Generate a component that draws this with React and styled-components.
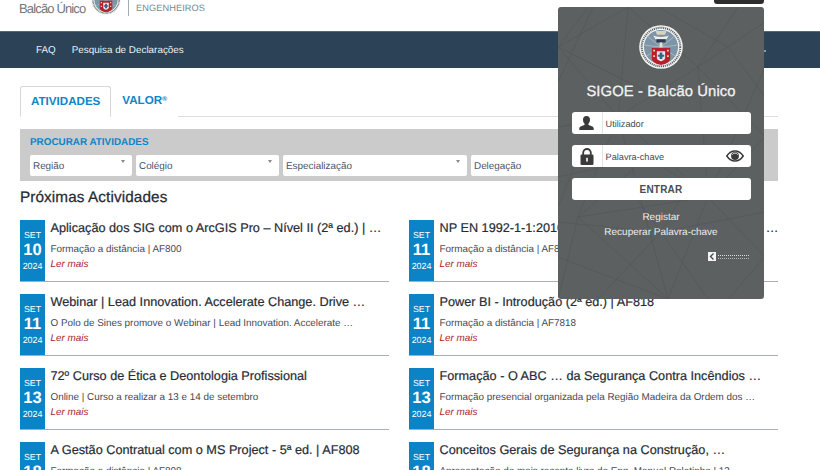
import React from 'react'
import styled, { createGlobalStyle } from 'styled-components'

const Global = createGlobalStyle`
  html, body { margin: 0; padding: 0; height: 470px; overflow: hidden; background: #fff; }
  body { font-family: "Liberation Sans", Arial, sans-serif; color: #272b33; text-rendering: geometricPrecision; }
  * { box-sizing: border-box; }
`

const Page = styled.div`
  position: relative;
  width: 820px;
  height: 470px;
  overflow: hidden;
`

const Header = styled.header`
  height: 31px;
  padding-left: 19px;
  display: flex;
  align-items: flex-end;
  overflow: hidden;
`

const BrandName = styled.span`
  width: 66px;
  font-size: 13px;
  letter-spacing: -0.85px;
  color: #73787c;
  line-height: 16px;
  margin-bottom: 14px;
  white-space: nowrap;
`

const Crest = styled.svg`
  width: 30px;
  height: 30px;
  margin: 0 7px 16px 6px;
  flex: none;
`

const Divider = styled.i`
  width: 1px;
  height: 16px;
  background: #a3abb0;
  margin-bottom: 15px;
`

const BrandSide = styled.span`
  font-size: 9.2px;
  letter-spacing: 0.1px;
  color: #6f8a96;
  margin: 0 0 17px 7px;
  line-height: 12px;
`

const Nav = styled.nav`
  height: 37px;
  background: #2b4257;
  padding-left: 36px;
  display: flex;
  align-items: center;
  gap: 16px;
  border-top: 1px solid #55697a;
`

const NavLink = styled.a`
  font-size: 9.9px;
  padding-top: 1px;
  color: #eef1f3;
`

const NavDot = styled.i`
  width: 2px;
  height: 2px;
  margin: 1px 54px 0 auto;
  background: #8c9aa6;
`

const Main = styled.main`
  padding: 18px 42px 0 20px;
`

const Tabs = styled.div`
  display: flex;
  height: 31px;
  border-bottom: 1px solid #dcdfe2;
`

const Tab = styled.a`
  height: 31px;
  padding: 0 10px;
  display: flex;
  align-items: center;
  font-size: 11.6px;
  font-weight: 700;
  color: #0c85c9;
  border-radius: 3px 3px 0 0;
  border: 1px solid ${p => (p.$active ? '#d3d7da' : 'transparent')};
  border-bottom: ${p => (p.$active ? '1px solid #fff' : '0')};
  background: #fff;
  padding-bottom: ${p => (p.$active ? '0' : '4px')};
  sup { font-size: 7px; line-height: 0; }
`

const Filter = styled.section`
  margin-top: 12px;
  height: 52px;
  background: #cbcbcb;
  padding: 8px 10px 0;
`

const FilterTitle = styled.div`
  font-size: 9.9px;
  font-weight: 700;
  color: #0c85c9;
  line-height: 12px;
  margin-bottom: 6px;
`

const FilterRow = styled.div`
  display: grid;
  grid-template-columns: 102px 143px 184px 200px;
  gap: 4px;
`

const Select = styled.div`
  position: relative;
  height: 21px;
  background: #fff;
  border-radius: 2px;
  padding: 1px 0 0 3px;
  display: flex;
  align-items: center;
  font-size: 9.9px;
  color: #4a5568;
  &::after {
    content: '';
    position: absolute;
    right: 7px;
    top: 5px;
    border: 2.5px solid transparent;
    border-top: 3px solid #888;
    border-bottom: 0;
  }
`

const Heading = styled.h2`
  margin: 8px 0 13px;
  font-size: 15.3px;
  line-height: 18px;
  font-weight: 400;
  letter-spacing: 0.1px;
  -webkit-text-stroke: 0.25px #272b33;
`

const Grid = styled.div`
  display: grid;
  grid-template-columns: 369px 369px;
  column-gap: 20px;
  row-gap: 12px;
`

const Card = styled.article`
  height: 62px;
  display: flex;
  border-bottom: 1px solid #a9aeb6;
`

const DateBox = styled.div`
  width: 25px;
  flex: none;
  background: #0a84c6;
  color: #fff;
  display: flex;
  flex-direction: column;
  align-items: center;
  padding-top: 10px;
`

const Month = styled.span`
  font-size: 8.8px;
  line-height: 10px;
`

const Day = styled.span`
  font-size: 16.5px;
  font-weight: 700;
  line-height: 17px;
  margin-top: 2px;
`

const Year = styled.span`
  font-size: 8.9px;
  line-height: 10px;
  margin-top: 2px;
`

const Body = styled.div`
  min-width: 0;
  padding-left: 5.5px;
`

const Title = styled.h3`
  margin: 0;
  font-size: 12.7px;
  line-height: 16px;
  font-weight: 400;
  -webkit-text-stroke: 0.2px #272b33;
  white-space: nowrap;
`

const Text = styled.p`
  margin: 7px 0 0;
  font-size: 9.9px;
  line-height: 13px;
  color: #444a52;
  white-space: nowrap;
`

const More = styled.a`
  display: block;
  margin-top: 2px;
  font-size: 9.9px;
  line-height: 13px;
  font-style: italic;
  color: #a81c2b;
`

const TopButton = styled.div`
  position: absolute;
  top: 0;
  left: 714px;
  width: 50px;
  height: 4px;
  background: #2d2d2d;
  border-radius: 0 0 3px 3px;
`

const Panel = styled.aside`
  position: absolute;
  left: 558px;
  top: 7px;
  width: 206px;
  height: 292px;
  border-radius: 3px;
  background: #5c6060;
  overflow: hidden;
  display: flex;
  flex-direction: column;
  align-items: center;
  padding-top: 18px;
  color: #f2f2f2;
`

const Mesh = styled.svg`
  position: absolute;
  inset: 0;
  width: 100%;
  height: 100%;
`

const Emblem = styled.svg`
  position: relative;
  width: 44px;
  height: 44px;
  flex: none;
`

const PanelTitle = styled.h1`
  position: relative;
  margin: 14px 0 11px;
  font-size: 14.8px;
  line-height: 18px;
  font-weight: 400;
  letter-spacing: 0.1px;
  -webkit-text-stroke: 0.3px #f2f2f2;
`

const Field = styled.div`
  position: relative;
  width: 179px;
  height: 22px;
  margin-bottom: 11px;
  background: #fff;
  border-radius: 3px;
  display: flex;
  align-items: center;
  font-size: 9.2px;
  line-height: 12px;
  color: #454a4e;
`

const FieldIcon = styled.span`
  width: 31px;
  height: 100%;
  flex: none;
  display: flex;
  align-items: center;
  justify-content: center;
  border-right: 1px solid #e4e4e4;
  margin-right: 3px;
`

const FieldLabel = styled.span`
  padding-top: 1px;
`

const Eye = styled.svg`
  position: absolute;
  right: 7px;
  top: 5px;
  width: 18px;
  height: 12px;
`

const Enter = styled.button`
  position: relative;
  width: 179px;
  height: 22px;
  border: 0;
  border-radius: 3px;
  background: #fff;
  font-family: inherit;
  font-size: 10px;
  font-weight: 700;
  letter-spacing: 0.2px;
  color: #4a4e50;
  padding: 0;
  margin-bottom: 10px;
`

const PanelLink = styled.a`
  position: relative;
  font-size: 10px;
  line-height: 15px;
  color: #eeeeee;
`

const Partner = styled.div`
  position: relative;
  align-self: flex-end;
  margin: 12px 15px 0 0;
  display: flex;
  align-items: center;
  gap: 2px;
`

const PartnerMark = styled.svg`
  width: 8px;
  height: 9px;
  flex: none;
`

const PartnerLines = styled.i`
  display: block;
  width: 31px;
  height: 4px;
  border-top: 1px dotted #dcdcdc;
  border-bottom: 1px dotted #bcbcbc;
`

const meshLines = [
  'M0 40 L70 0 L140 60 L207 15', 'M0 40 L60 110 L20 210 L0 292', 'M70 0 L60 110 L140 60 L207 130',
  'M60 110 L150 190 L207 130', 'M20 210 L150 190 L110 292', 'M20 210 L110 292 L0 250',
  'M150 190 L207 250 L170 292', 'M140 60 L150 190', 'M0 120 L60 110', 'M60 110 L110 292',
  'M30 0 L0 40 L100 90', 'M207 60 L150 190 L90 150', 'M0 170 L90 150 L20 210', 'M180 0 L140 60',
  'M103 225 L40 292', 'M103 225 L0 215', 'M103 225 L207 205', 'M103 225 L150 292', 'M103 225 L70 180',
  'M103 225 L135 170', 'M207 90 L170 40 L100 0', 'M0 75 L35 0', 'M20 150 L0 200',
]

const activities = [
  ['10', 'Aplicação dos SIG com o ArcGIS Pro – Nível II (2ª ed.) | …', 'Formação a distância | AF800'],
  ['11', 'NP EN 1992-1-1:2010 - Projecto de Estruturas de Betão I …', 'Formação a distância | AF817'],
  ['11', 'Webinar | Lead Innovation. Accelerate Change. Drive …', 'O Polo de Sines promove o Webinar | Lead Innovation. Accelerate …'],
  ['11', 'Power BI - Introdução (2ª ed.) | AF818', 'Formação a distância | AF7818'],
  ['13', '72º Curso de Ética e Deontologia Profissional', 'Online | Curso a realizar a 13 e 14 de setembro'],
  ['13', 'Formação - O ABC … da Segurança Contra Incêndios …', 'Formação presencial organizada pela Região Madeira da Ordem dos …'],
  ['18', 'A Gestão Contratual com o MS Project - 5ª ed. | AF808', 'Formação a distância | AF808'],
  ['18', 'Conceitos Gerais de Segurança na Construção, …', 'Apresentação do mais recente livro do Eng. Manuel Roletinho | 13'],
]

function CrestArt() {
  return (
    <>
      <circle cx="24" cy="24" r="23.8" fill="#f3f3f1" />
      <circle cx="24" cy="24" r="21" fill="none" stroke="#5b6268" strokeWidth="2.2" strokeDasharray="1.2 0.9" />
      <circle cx="24" cy="24" r="18.6" fill="#7d95a6" />
      <path d="M24 24L9 12M24 24L39 12M24 24L6 22M24 24L42 22M24 24L8 34M24 24L40 34" stroke="#a9bac6" strokeWidth="1" />
      <path d="M18 6.500h12l-1.500 4h-9z" fill="#d9d3bf" />
      <path d="M15.500 11.500c3 2 14 2 17 0l-2.500 4h-12z" fill="#f1f0ea" />
      <path d="M19 15.500h10v3.500H19z" fill="#2c3b50" />
      <path d="M22.500 19h3v5h-3z" fill="#e7e3d3" />
      <path d="M14 25h20v11c0 4.500-5 7-10 7.500-5-.5-10-3-10-7.500z" fill="#b81f2b" />
      <path d="M19.500 28.500h9v7.500c0 2-2.500 3-4.500 3.500-2-.5-4.500-1.500-4.500-3.500z" fill="#e6e8ea" />
      <path d="M22.500 30h3v7h-3zM20.500 32.500h7v2.200h-7z" fill="#3f5f8a" />
      <path d="M15.500 27h2v2h-2zM30.500 27h2v2h-2zM15.500 33h2v2h-2zM30.500 33h2v2h-2z" fill="#ecd9a8" />
    </>
  )
}

export default function App() {
  return (
    <Page>
      <Global />
      <Header>
        <BrandName>Balcão Único</BrandName>
        <Crest viewBox="0 0 48 48"><CrestArt /></Crest>
        <Divider />
        <BrandSide>ENGENHEIROS</BrandSide>
      </Header>
      <Nav>
        <NavLink>FAQ</NavLink>
        <NavLink>Pesquisa de Declarações</NavLink>
        <NavDot />
      </Nav>
      <Main>
        <Tabs>
          <Tab $active>ATIVIDADES</Tab>
          <Tab>VALOR<sup>®</sup></Tab>
        </Tabs>
        <Filter>
          <FilterTitle>PROCURAR ATIVIDADES</FilterTitle>
          <FilterRow>
            <Select>Região</Select>
            <Select>Colégio</Select>
            <Select>Especialização</Select>
            <Select>Delegação</Select>
          </FilterRow>
        </Filter>
        <Heading>Próximas Actividades</Heading>
        <Grid>
          {activities.map(([day, title, text]) => (
            <Card key={title}>
              <DateBox>
                <Month>SET</Month>
                <Day>{day}</Day>
                <Year>2024</Year>
              </DateBox>
              <Body>
                <Title>{title}</Title>
                <Text>{text}</Text>
                <More>Ler mais</More>
              </Body>
            </Card>
          ))}
        </Grid>
      </Main>
      <TopButton />
      <Panel>
        <Mesh viewBox="0 0 206 292" fill="none" stroke="#545858" strokeWidth="0.7">
          {meshLines.map(d => <path key={d} d={d} />)}
        </Mesh>
        <Emblem viewBox="0 0 48 48"><CrestArt /></Emblem>
        <PanelTitle>SIGOE - Balcão Único</PanelTitle>
        <Field>
          <FieldIcon>
            <svg width="15" height="14" viewBox="0 0 15 14" fill="#3a3a3a">
              <path d="M7.500 0C5.200 0 4 1.700 4 3.800c0 1.600.6 3 1.600 3.900v1C4 9.900.3 10.200.3 12.300V14h14.400v-1.700c0-2.100-3.700-2.400-5.300-3.600v-1c1-.9 1.600-2.300 1.600-3.900C11 1.700 9.800 0 7.500 0z" />
            </svg>
          </FieldIcon>
          <FieldLabel>Utilizador</FieldLabel>
        </Field>
        <Field>
          <FieldIcon>
            <svg width="14" height="17" viewBox="0 0 14 17">
              <path d="M3.200 7.500V4.800a3.800 3.800 0 0 1 7.600 0v2.700" fill="none" stroke="#3a3a3a" strokeWidth="1.800" />
              <rect x="0.500" y="6.500" width="13" height="10.500" rx="1.300" fill="#3a3a3a" />
              <rect x="6.200" y="9.800" width="1.600" height="3.800" fill="#fff" />
            </svg>
          </FieldIcon>
          <FieldLabel>Palavra-chave</FieldLabel>
          <Eye viewBox="0 0 18 12">
            <path d="M.8 6C3 2.700 6 1 9 1s6 1.700 8.200 5C15 9.300 12 11 9 11S3 9.300.8 6z" fill="none" stroke="#3a3a3a" strokeWidth="1.500" />
            <circle cx="9" cy="6" r="3.900" fill="#3a3a3a" />
            <path d="M6.300 4.800a3 3 0 0 1 5.400 0" fill="none" stroke="#fff" strokeWidth="0.800" />
          </Eye>
        </Field>
        <Enter>ENTRAR</Enter>
        <PanelLink>Registar</PanelLink>
        <PanelLink>Recuperar Palavra-chave</PanelLink>
        <Partner>
          <PartnerMark viewBox="0 0 8 9">
            <rect width="8" height="9" fill="#f4f4f4" />
            <path d="M5.500 1.500L2.500 4.500l3 3" fill="none" stroke="#4a4e50" strokeWidth="1.400" />
          </PartnerMark>
          <PartnerLines />
        </Partner>
      </Panel>
    </Page>
  )
}
